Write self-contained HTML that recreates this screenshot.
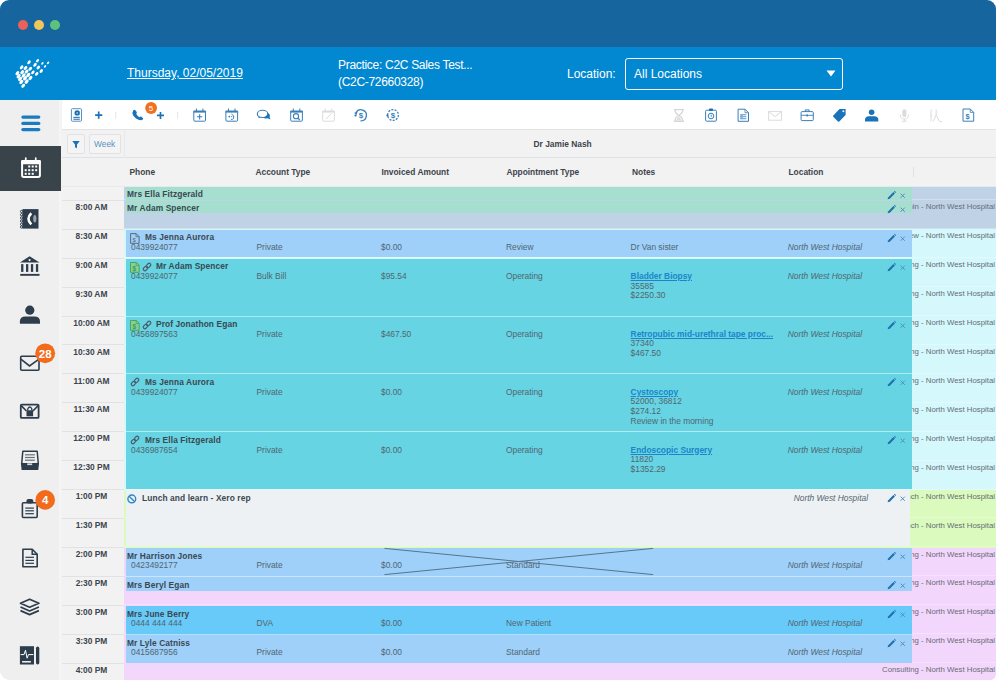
<!DOCTYPE html><html><head><meta charset="utf-8"><style>
*{box-sizing:border-box;margin:0;padding:0}
html,body{width:996px;height:680px;overflow:hidden;background:#fff}
body{position:relative;font-family:'Liberation Sans',sans-serif;}
.a{position:absolute}
.t{position:absolute;white-space:nowrap;line-height:1}
#win{position:absolute;left:0;top:0;width:996px;height:680px;border-radius:9px 9px 6px 10px;overflow:hidden;background:#f2f2f2}
</style></head><body><div id="win">
<div class="a" style="left:0;top:0;width:996px;height:47px;background:#17659e"></div>
<div class="a" style="left:17.6px;top:19.8px;width:10.4px;height:10.4px;border-radius:50%;background:#e8625a"></div>
<div class="a" style="left:33.5px;top:19.8px;width:10.4px;height:10.4px;border-radius:50%;background:#f0c65a"></div>
<div class="a" style="left:49.699999999999996px;top:19.8px;width:10.4px;height:10.4px;border-radius:50%;background:#5fc27a"></div>
<div class="a" style="left:0;top:47px;width:996px;height:53px;background:#0288d1"></div>
<svg class="a" style="left:0;top:0" width="60" height="100" viewBox="0 0 60 100"><ellipse cx="37.5" cy="60.7" rx="1.91" ry="1.23" fill="#fff" transform="rotate(-48 37.5 60.7)"/><ellipse cx="42.4" cy="63.4" rx="1.46" ry="0.94" fill="#fff" transform="rotate(-48 42.4 63.4)"/><ellipse cx="48.1" cy="62.9" rx="1.46" ry="0.94" fill="#fff" transform="rotate(-48 48.1 62.9)"/><ellipse cx="45.1" cy="66.4" rx="1.46" ry="0.94" fill="#fff" transform="rotate(-48 45.1 66.4)"/><ellipse cx="29.0" cy="62.3" rx="2.14" ry="1.38" fill="#fff" transform="rotate(-48 29.0 62.3)"/><ellipse cx="35.0" cy="64.8" rx="2.14" ry="1.38" fill="#fff" transform="rotate(-48 35.0 64.8)"/><ellipse cx="38.3" cy="67.5" rx="2.14" ry="1.38" fill="#fff" transform="rotate(-48 38.3 67.5)"/><ellipse cx="41.3" cy="71" rx="2.14" ry="1.38" fill="#fff" transform="rotate(-48 41.3 71)"/><ellipse cx="32.9" cy="72.4" rx="2.14" ry="1.38" fill="#fff" transform="rotate(-48 32.9 72.4)"/><ellipse cx="36.7" cy="73.9" rx="2.14" ry="1.38" fill="#fff" transform="rotate(-48 36.7 73.9)"/><ellipse cx="21.6" cy="67.4" rx="2.25" ry="1.45" fill="#fff" transform="rotate(-48 21.6 67.4)"/><ellipse cx="25.5" cy="68" rx="2.25" ry="1.45" fill="#fff" transform="rotate(-48 25.5 68)"/><ellipse cx="30.3" cy="68.8" rx="2.25" ry="1.45" fill="#fff" transform="rotate(-48 30.3 68.8)"/><ellipse cx="17.4" cy="73.2" rx="2.36" ry="1.52" fill="#fff" transform="rotate(-48 17.4 73.2)"/><ellipse cx="22.2" cy="72.2" rx="2.36" ry="1.52" fill="#fff" transform="rotate(-48 22.2 72.2)"/><ellipse cx="26.6" cy="71.6" rx="2.36" ry="1.52" fill="#fff" transform="rotate(-48 26.6 71.6)"/><ellipse cx="18.6" cy="76.2" rx="2.48" ry="1.59" fill="#fff" transform="rotate(-48 18.6 76.2)"/><ellipse cx="23.6" cy="75.5" rx="2.48" ry="1.59" fill="#fff" transform="rotate(-48 23.6 75.5)"/><ellipse cx="28.3" cy="74.9" rx="2.48" ry="1.59" fill="#fff" transform="rotate(-48 28.3 74.9)"/><ellipse cx="20.1" cy="78.9" rx="2.48" ry="1.59" fill="#fff" transform="rotate(-48 20.1 78.9)"/><ellipse cx="25.1" cy="78.3" rx="2.48" ry="1.59" fill="#fff" transform="rotate(-48 25.1 78.3)"/><ellipse cx="30.4" cy="78.0" rx="2.48" ry="1.59" fill="#fff" transform="rotate(-48 30.4 78.0)"/><ellipse cx="21.3" cy="82.0" rx="2.48" ry="1.59" fill="#fff" transform="rotate(-48 21.3 82.0)"/><ellipse cx="26.6" cy="81.6" rx="2.48" ry="1.59" fill="#fff" transform="rotate(-48 26.6 81.6)"/><ellipse cx="23.2" cy="85.8" rx="2.36" ry="1.52" fill="#fff" transform="rotate(-48 23.2 85.8)"/></svg>
<div class="t" style="left:127px;top:67px;font-size:12px;color:#fff;text-decoration:underline">Thursday, 02/05/2019</div>
<div class="t" style="left:338px;top:58.8px;font-size:12px;color:#fff;letter-spacing:-0.3px">Practice: C2C Sales Test...</div>
<div class="t" style="left:338px;top:75.7px;font-size:12px;color:#fff;letter-spacing:-0.3px">(C2C-72660328)</div>
<div class="t" style="left:567px;top:67.8px;font-size:12px;color:#fff">Location:</div>
<div class="a" style="left:625px;top:58px;width:218px;height:31.8px;border:1.4px solid #fff;border-radius:3px"></div>
<div class="t" style="left:634px;top:67.8px;font-size:12px;color:#fff">All Locations</div>
<svg class="a" style="left:826px;top:70px" width="10" height="7"><path d="M0.5 0.5H9.5L5 6.5Z" fill="#fff"/></svg>
<div class="a" style="left:0;top:100px;width:61px;height:580px;background:#efefef;border-right:2px solid #f5f5f5"></div>
<div class="a" style="left:0;top:146px;width:61px;height:45px;background:#38434a"></div>
<div class="a" style="left:62px;top:100px;width:934px;height:30px;background:#fff;border-bottom:1px solid #e3e3e3"></div>
<div class="a" style="left:62px;top:130px;width:934px;height:28px;background:#f2f2f2;border-bottom:1px solid #dde2e8"></div>
<div class="a" style="left:67px;top:134px;width:18px;height:20px;border:1px solid #e2e2e2;border-radius:2px;background:#f4f4f4"></div>
<div class="a" style="left:89px;top:134px;width:32px;height:20px;border:1px solid #e2e2e2;border-radius:2px;background:#f4f4f4"></div>
<div class="t" style="left:94px;top:139.5px;font-size:8.4px;color:#5b92c2">Week</div>
<div class="a" style="left:124px;top:130px;width:1px;height:557px;background:#e6e9ee"></div>
<div class="t" style="left:533.5px;top:139.5px;font-size:8.4px;font-weight:bold;color:#3c444c">Dr Jamie Nash</div>
<div class="a" style="left:62px;top:158px;width:934px;height:29px;background:#f2f2f2;border-bottom:1px solid #e6e9ee"></div>
<div class="t" style="left:129.5px;top:168.4px;font-size:8.4px;font-weight:bold;color:#3c444c">Phone</div>
<div class="t" style="left:255.5px;top:168.4px;font-size:8.4px;font-weight:bold;color:#3c444c">Account Type</div>
<div class="t" style="left:381.4px;top:168.4px;font-size:8.4px;font-weight:bold;color:#3c444c">Invoiced Amount</div>
<div class="t" style="left:506.4px;top:168.4px;font-size:8.4px;font-weight:bold;color:#3c444c">Appointment Type</div>
<div class="t" style="left:632px;top:168.4px;font-size:8.4px;font-weight:bold;color:#3c444c">Notes</div>
<div class="t" style="left:788.5px;top:168.4px;font-size:8.4px;font-weight:bold;color:#3c444c">Location</div>
<div class="a" style="left:913px;top:167px;width:1px;height:10px;background:#e2e2e2"></div>
<div class="a" style="left:62px;top:187px;width:62px;height:493px;background:#f2f2f2"></div>
<div class="a" style="left:62px;top:200px;width:62px;height:1px;background:#e2e2e2"></div>
<div class="t" style="left:60.5px;width:62px;text-align:center;top:202.8px;font-size:8.4px;font-weight:bold;color:#3c444c;padding-left:0px">8:00 AM</div>
<div class="a" style="left:62px;top:229px;width:62px;height:1px;background:#e2e2e2"></div>
<div class="t" style="left:60.5px;width:62px;text-align:center;top:231.8px;font-size:8.4px;font-weight:bold;color:#3c444c;padding-left:0px">8:30 AM</div>
<div class="a" style="left:62px;top:258px;width:62px;height:1px;background:#e2e2e2"></div>
<div class="t" style="left:60.5px;width:62px;text-align:center;top:260.7px;font-size:8.4px;font-weight:bold;color:#3c444c;padding-left:0px">9:00 AM</div>
<div class="a" style="left:62px;top:287px;width:62px;height:1px;background:#e2e2e2"></div>
<div class="t" style="left:60.5px;width:62px;text-align:center;top:289.7px;font-size:8.4px;font-weight:bold;color:#3c444c;padding-left:0px">9:30 AM</div>
<div class="a" style="left:62px;top:316px;width:62px;height:1px;background:#e2e2e2"></div>
<div class="t" style="left:60.5px;width:62px;text-align:center;top:318.6px;font-size:8.4px;font-weight:bold;color:#3c444c;padding-left:0px">10:00 AM</div>
<div class="a" style="left:62px;top:344px;width:62px;height:1px;background:#e2e2e2"></div>
<div class="t" style="left:60.5px;width:62px;text-align:center;top:347.6px;font-size:8.4px;font-weight:bold;color:#3c444c;padding-left:0px">10:30 AM</div>
<div class="a" style="left:62px;top:373px;width:62px;height:1px;background:#e2e2e2"></div>
<div class="t" style="left:60.5px;width:62px;text-align:center;top:376.5px;font-size:8.4px;font-weight:bold;color:#3c444c;padding-left:0px">11:00 AM</div>
<div class="a" style="left:62px;top:402px;width:62px;height:1px;background:#e2e2e2"></div>
<div class="t" style="left:60.5px;width:62px;text-align:center;top:405.4px;font-size:8.4px;font-weight:bold;color:#3c444c;padding-left:0px">11:30 AM</div>
<div class="a" style="left:62px;top:431px;width:62px;height:1px;background:#e2e2e2"></div>
<div class="t" style="left:60.5px;width:62px;text-align:center;top:434.4px;font-size:8.4px;font-weight:bold;color:#3c444c;padding-left:0px">12:00 PM</div>
<div class="a" style="left:62px;top:460px;width:62px;height:1px;background:#e2e2e2"></div>
<div class="t" style="left:60.5px;width:62px;text-align:center;top:463.4px;font-size:8.4px;font-weight:bold;color:#3c444c;padding-left:0px">12:30 PM</div>
<div class="a" style="left:62px;top:489px;width:62px;height:1px;background:#e2e2e2"></div>
<div class="t" style="left:60.5px;width:62px;text-align:center;top:492.3px;font-size:8.4px;font-weight:bold;color:#3c444c;padding-left:0px">1:00 PM</div>
<div class="a" style="left:62px;top:518px;width:62px;height:1px;background:#e2e2e2"></div>
<div class="t" style="left:60.5px;width:62px;text-align:center;top:521.2px;font-size:8.4px;font-weight:bold;color:#3c444c;padding-left:0px">1:30 PM</div>
<div class="a" style="left:62px;top:547px;width:62px;height:1px;background:#e2e2e2"></div>
<div class="t" style="left:60.5px;width:62px;text-align:center;top:550.2px;font-size:8.4px;font-weight:bold;color:#3c444c;padding-left:0px">2:00 PM</div>
<div class="a" style="left:62px;top:576px;width:62px;height:1px;background:#e2e2e2"></div>
<div class="t" style="left:60.5px;width:62px;text-align:center;top:579.1px;font-size:8.4px;font-weight:bold;color:#3c444c;padding-left:0px">2:30 PM</div>
<div class="a" style="left:62px;top:605px;width:62px;height:1px;background:#e2e2e2"></div>
<div class="t" style="left:60.5px;width:62px;text-align:center;top:608.1px;font-size:8.4px;font-weight:bold;color:#3c444c;padding-left:0px">3:00 PM</div>
<div class="a" style="left:62px;top:634px;width:62px;height:1px;background:#e2e2e2"></div>
<div class="t" style="left:60.5px;width:62px;text-align:center;top:637.0px;font-size:8.4px;font-weight:bold;color:#3c444c;padding-left:0px">3:30 PM</div>
<div class="a" style="left:62px;top:663px;width:62px;height:1px;background:#e2e2e2"></div>
<div class="t" style="left:60.5px;width:62px;text-align:center;top:666.0px;font-size:8.4px;font-weight:bold;color:#3c444c;padding-left:0px">4:00 PM</div>
<div class="a" style="left:124px;top:187px;width:872px;height:42px;background:#bfd2e6"></div>
<div class="a" style="left:124px;top:229px;width:872px;height:261px;background:#d4f8fb"></div>
<div class="a" style="left:124px;top:490px;width:872px;height:58px;background:#dbfabe"></div>
<div class="a" style="left:124px;top:548px;width:872px;height:132px;background:#f3d6fb"></div>
<div class="a" style="left:124px;top:199px;width:872px;height:1px;background:rgba(255,255,255,.3)"></div>
<div class="a" style="left:124px;top:228px;width:872px;height:1px;background:rgba(255,255,255,.3)"></div>
<div class="a" style="left:124px;top:257px;width:872px;height:1px;background:rgba(255,255,255,.3)"></div>
<div class="a" style="left:124px;top:286px;width:872px;height:1px;background:rgba(255,255,255,.3)"></div>
<div class="a" style="left:124px;top:315px;width:872px;height:1px;background:rgba(255,255,255,.3)"></div>
<div class="a" style="left:124px;top:344px;width:872px;height:1px;background:rgba(255,255,255,.3)"></div>
<div class="a" style="left:124px;top:373px;width:872px;height:1px;background:rgba(255,255,255,.3)"></div>
<div class="a" style="left:124px;top:402px;width:872px;height:1px;background:rgba(255,255,255,.3)"></div>
<div class="a" style="left:124px;top:431px;width:872px;height:1px;background:rgba(255,255,255,.3)"></div>
<div class="a" style="left:124px;top:460px;width:872px;height:1px;background:rgba(255,255,255,.3)"></div>
<div class="a" style="left:124px;top:489px;width:872px;height:1px;background:rgba(255,255,255,.3)"></div>
<div class="a" style="left:124px;top:517px;width:872px;height:1px;background:rgba(255,255,255,.3)"></div>
<div class="a" style="left:124px;top:546px;width:872px;height:1px;background:rgba(255,255,255,.3)"></div>
<div class="a" style="left:124px;top:575px;width:872px;height:1px;background:rgba(255,255,255,.3)"></div>
<div class="a" style="left:124px;top:604px;width:872px;height:1px;background:rgba(255,255,255,.3)"></div>
<div class="a" style="left:124px;top:633px;width:872px;height:1px;background:rgba(255,255,255,.3)"></div>
<div class="a" style="left:124px;top:662px;width:872px;height:1px;background:rgba(255,255,255,.3)"></div>
<div class="t" style="right:1px;top:203.1px;font-size:7.8px;color:#666d76">Admin - North West Hospital</div>
<div class="t" style="right:1px;top:232.0px;font-size:7.8px;color:#666d76">Review - North West Hospital</div>
<div class="t" style="right:1px;top:261.0px;font-size:7.8px;color:#666d76">Operating - North West Hospital</div>
<div class="t" style="right:1px;top:290.0px;font-size:7.8px;color:#666d76">Operating - North West Hospital</div>
<div class="t" style="right:1px;top:318.9px;font-size:7.8px;color:#666d76">Operating - North West Hospital</div>
<div class="t" style="right:1px;top:347.9px;font-size:7.8px;color:#666d76">Operating - North West Hospital</div>
<div class="t" style="right:1px;top:376.8px;font-size:7.8px;color:#666d76">Operating - North West Hospital</div>
<div class="t" style="right:1px;top:405.8px;font-size:7.8px;color:#666d76">Operating - North West Hospital</div>
<div class="t" style="right:1px;top:434.7px;font-size:7.8px;color:#666d76">Operating - North West Hospital</div>
<div class="t" style="right:1px;top:463.7px;font-size:7.8px;color:#666d76">Operating - North West Hospital</div>
<div class="t" style="right:1px;top:492.6px;font-size:7.8px;color:#666d76">Lunch - North West Hospital</div>
<div class="t" style="right:1px;top:521.6px;font-size:7.8px;color:#666d76">Lunch - North West Hospital</div>
<div class="t" style="right:1px;top:550.5px;font-size:7.8px;color:#666d76">Consulting - North West Hospital</div>
<div class="t" style="right:1px;top:579.4px;font-size:7.8px;color:#666d76">Consulting - North West Hospital</div>
<div class="t" style="right:1px;top:608.4px;font-size:7.8px;color:#666d76">Consulting - North West Hospital</div>
<div class="t" style="right:1px;top:637.4px;font-size:7.8px;color:#666d76">Consulting - North West Hospital</div>
<div class="t" style="right:1px;top:666.3px;font-size:7.8px;color:#666d76">Consulting - North West Hospital</div>
<div class="a" style="left:126px;top:187px;width:786px;height:13px;background:#a6dfd0"></div>
<svg class="a" style="left:885px;top:188px;width:24px;height:14px" viewBox="0 0 24 14"><path d="M2.6 11.3 L3.3 9.2 L8.4 4.1 L9.9 5.6 L4.8 10.7 Z" fill="#1f6fae"/><path d="M8.9 3.6 L9.7 2.8 L11.2 4.3 L10.4 5.1 Z" fill="#2a7fc0"/><path d="M15.6 5.6 L19.8 9.8 M19.8 5.6 L15.6 9.8" stroke="#4b90c6" stroke-width="1"/></svg>
<div class="t" style="left:127px;top:190.10px;font-size:8.4px;font-weight:bold;color:#3a4850;letter-spacing:0.1px;">Mrs Ella Fitzgerald</div>
<div class="a" style="left:126px;top:201px;width:786px;height:12px;background:#a6dfd0"></div>
<svg class="a" style="left:885px;top:202px;width:24px;height:14px" viewBox="0 0 24 14"><path d="M2.6 11.3 L3.3 9.2 L8.4 4.1 L9.9 5.6 L4.8 10.7 Z" fill="#1f6fae"/><path d="M8.9 3.6 L9.7 2.8 L11.2 4.3 L10.4 5.1 Z" fill="#2a7fc0"/><path d="M15.6 5.6 L19.8 9.8 M19.8 5.6 L15.6 9.8" stroke="#4b90c6" stroke-width="1"/></svg>
<div class="t" style="left:127px;top:203.90px;font-size:8.4px;font-weight:bold;color:#3a4850;letter-spacing:0.1px;">Mr Adam Spencer</div>
<div class="a" style="left:126px;top:230px;width:786px;height:27px;background:#9ed0fa"></div>
<svg class="a" style="left:885px;top:231px;width:24px;height:14px" viewBox="0 0 24 14"><path d="M2.6 11.3 L3.3 9.2 L8.4 4.1 L9.9 5.6 L4.8 10.7 Z" fill="#1f6fae"/><path d="M8.9 3.6 L9.7 2.8 L11.2 4.3 L10.4 5.1 Z" fill="#2a7fc0"/><path d="M15.6 5.6 L19.8 9.8 M19.8 5.6 L15.6 9.8" stroke="#4b90c6" stroke-width="1"/></svg>
<svg class="a" style="left:130px;top:233px" width="10" height="11" viewBox="0 0 10 11"><path d="M0.6 0.6 H6.2 L9.1 3.5 V10.3 H0.6 Z" fill="none" stroke="#5a6a78" stroke-width="1"/><path d="M6 0.6 V3.7 H9.1" fill="none" stroke="#5a6a78" stroke-width="0.8"/><text x="2.4" y="8.9" font-size="6" font-family="Liberation Sans" fill="#5a6a78">$</text></svg>
<div class="t" style="left:145px;top:233.35px;font-size:8.4px;font-weight:bold;color:#3a4850;letter-spacing:0.1px;">Ms Jenna Aurora</div>
<div class="t" style="left:131px;top:242.85px;font-size:8.4px;color:#52656f;">0439924077</div>
<div class="t" style="left:256.5px;top:242.85px;font-size:8.4px;color:#52656f;">Private</div>
<div class="t" style="left:381px;top:242.85px;font-size:8.4px;color:#52656f;">$0.00</div>
<div class="t" style="left:506px;top:242.85px;font-size:8.4px;color:#52656f;">Review</div>
<div class="t" style="left:630.6px;top:242.85px;font-size:8.4px;color:#52656f;">Dr Van sister</div>
<div class="t" style="left:762px;width:100px;text-align:right;top:242.85px;font-size:8.4px;font-style:italic;color:#52656f;">North West Hospital</div>
<div class="a" style="left:126px;top:259px;width:786px;height:57px;background:#66d4e3"></div>
<svg class="a" style="left:885px;top:260px;width:24px;height:14px" viewBox="0 0 24 14"><path d="M2.6 11.3 L3.3 9.2 L8.4 4.1 L9.9 5.6 L4.8 10.7 Z" fill="#1f6fae"/><path d="M8.9 3.6 L9.7 2.8 L11.2 4.3 L10.4 5.1 Z" fill="#2a7fc0"/><path d="M15.6 5.6 L19.8 9.8 M19.8 5.6 L15.6 9.8" stroke="#4b90c6" stroke-width="1"/></svg>
<svg class="a" style="left:130px;top:262px" width="10" height="11" viewBox="0 0 10 11"><path d="M0.5 0.5 H6.4 L9.2 3.3 V10.3 H0.5 Z" fill="#86cf95" stroke="#45a85c" stroke-width="1"/><path d="M6.2 0.6 V3.5 H9.1" fill="none" stroke="#45a85c" stroke-width="0.8"/><text x="2.5" y="8.8" font-size="6.5" font-weight="bold" font-family="Liberation Sans" fill="#3f9a55">$</text></svg><svg class="a" style="left:141.5px;top:262px" width="10" height="10" viewBox="0 0 10 10"><g transform="rotate(-45 5 5)" fill="none" stroke="#4b5c68" stroke-width="1.1"><rect x="0.4" y="3.4" width="5" height="3.2" rx="1.6"/><rect x="4.6" y="3.4" width="5" height="3.2" rx="1.6"/></g></svg>
<div class="t" style="left:156px;top:262.30px;font-size:8.4px;font-weight:bold;color:#3a4850;letter-spacing:0.1px;">Mr Adam Spencer</div>
<div class="t" style="left:131px;top:271.80px;font-size:8.4px;color:#52656f;">0439924077</div>
<div class="t" style="left:256.5px;top:271.80px;font-size:8.4px;color:#52656f;">Bulk Bill</div>
<div class="t" style="left:381px;top:271.80px;font-size:8.4px;color:#52656f;">$95.54</div>
<div class="t" style="left:506px;top:271.80px;font-size:8.4px;color:#52656f;">Operating</div>
<div class="t" style="left:630.6px;top:271.80px;font-size:8.4px;font-weight:bold;color:#1c84ca;text-decoration:underline;">Bladder Biopsy</div>
<div class="t" style="left:630.6px;top:281.55px;font-size:8.4px;color:#52656f;">35585</div>
<div class="t" style="left:630.6px;top:291.30px;font-size:8.4px;color:#52656f;">$2250.30</div>
<div class="t" style="left:762px;width:100px;text-align:right;top:271.80px;font-size:8.4px;font-style:italic;color:#52656f;">North West Hospital</div>
<div class="a" style="left:126px;top:317px;width:786px;height:56px;background:#66d4e3"></div>
<svg class="a" style="left:885px;top:318px;width:24px;height:14px" viewBox="0 0 24 14"><path d="M2.6 11.3 L3.3 9.2 L8.4 4.1 L9.9 5.6 L4.8 10.7 Z" fill="#1f6fae"/><path d="M8.9 3.6 L9.7 2.8 L11.2 4.3 L10.4 5.1 Z" fill="#2a7fc0"/><path d="M15.6 5.6 L19.8 9.8 M19.8 5.6 L15.6 9.8" stroke="#4b90c6" stroke-width="1"/></svg>
<svg class="a" style="left:130px;top:320px" width="10" height="11" viewBox="0 0 10 11"><path d="M0.5 0.5 H6.4 L9.2 3.3 V10.3 H0.5 Z" fill="#86cf95" stroke="#45a85c" stroke-width="1"/><path d="M6.2 0.6 V3.5 H9.1" fill="none" stroke="#45a85c" stroke-width="0.8"/><text x="2.5" y="8.8" font-size="6.5" font-weight="bold" font-family="Liberation Sans" fill="#3f9a55">$</text></svg><svg class="a" style="left:141.5px;top:320px" width="10" height="10" viewBox="0 0 10 10"><g transform="rotate(-45 5 5)" fill="none" stroke="#4b5c68" stroke-width="1.1"><rect x="0.4" y="3.4" width="5" height="3.2" rx="1.6"/><rect x="4.6" y="3.4" width="5" height="3.2" rx="1.6"/></g></svg>
<div class="t" style="left:156px;top:320.20px;font-size:8.4px;font-weight:bold;color:#3a4850;letter-spacing:0.1px;">Prof Jonathon Egan</div>
<div class="t" style="left:131px;top:329.70px;font-size:8.4px;color:#52656f;">0456897563</div>
<div class="t" style="left:256.5px;top:329.70px;font-size:8.4px;color:#52656f;">Private</div>
<div class="t" style="left:381px;top:329.70px;font-size:8.4px;color:#52656f;">$467.50</div>
<div class="t" style="left:506px;top:329.70px;font-size:8.4px;color:#52656f;">Operating</div>
<div class="t" style="left:630.6px;top:329.70px;font-size:8.4px;font-weight:bold;color:#1c84ca;text-decoration:underline;">Retropubic mid-urethral tape proc...</div>
<div class="t" style="left:630.6px;top:339.45px;font-size:8.4px;color:#52656f;">37340</div>
<div class="t" style="left:630.6px;top:349.20px;font-size:8.4px;color:#52656f;">$467.50</div>
<div class="t" style="left:762px;width:100px;text-align:right;top:329.70px;font-size:8.4px;font-style:italic;color:#52656f;">North West Hospital</div>
<div class="a" style="left:126px;top:374px;width:786px;height:57px;background:#66d4e3"></div>
<svg class="a" style="left:885px;top:375px;width:24px;height:14px" viewBox="0 0 24 14"><path d="M2.6 11.3 L3.3 9.2 L8.4 4.1 L9.9 5.6 L4.8 10.7 Z" fill="#1f6fae"/><path d="M8.9 3.6 L9.7 2.8 L11.2 4.3 L10.4 5.1 Z" fill="#2a7fc0"/><path d="M15.6 5.6 L19.8 9.8 M19.8 5.6 L15.6 9.8" stroke="#4b90c6" stroke-width="1"/></svg>
<svg class="a" style="left:130px;top:377px" width="10" height="10" viewBox="0 0 10 10"><g transform="rotate(-45 5 5)" fill="none" stroke="#4b5c68" stroke-width="1.1"><rect x="0.4" y="3.4" width="5" height="3.2" rx="1.6"/><rect x="4.6" y="3.4" width="5" height="3.2" rx="1.6"/></g></svg>
<div class="t" style="left:145px;top:378.10px;font-size:8.4px;font-weight:bold;color:#3a4850;letter-spacing:0.1px;">Ms Jenna Aurora</div>
<div class="t" style="left:131px;top:387.60px;font-size:8.4px;color:#52656f;">0439924077</div>
<div class="t" style="left:256.5px;top:387.60px;font-size:8.4px;color:#52656f;">Private</div>
<div class="t" style="left:381px;top:387.60px;font-size:8.4px;color:#52656f;">$0.00</div>
<div class="t" style="left:506px;top:387.60px;font-size:8.4px;color:#52656f;">Operating</div>
<div class="t" style="left:630.6px;top:387.60px;font-size:8.4px;font-weight:bold;color:#1c84ca;text-decoration:underline;">Cystoscopy</div>
<div class="t" style="left:630.6px;top:397.35px;font-size:8.4px;color:#52656f;">52000, 36812</div>
<div class="t" style="left:630.6px;top:407.10px;font-size:8.4px;color:#52656f;">$274.12</div>
<div class="t" style="left:630.6px;top:416.85px;font-size:8.4px;color:#52656f;">Review in the morning</div>
<div class="t" style="left:762px;width:100px;text-align:right;top:387.60px;font-size:8.4px;font-style:italic;color:#52656f;">North West Hospital</div>
<div class="a" style="left:126px;top:432px;width:786px;height:57px;background:#66d4e3"></div>
<svg class="a" style="left:885px;top:433px;width:24px;height:14px" viewBox="0 0 24 14"><path d="M2.6 11.3 L3.3 9.2 L8.4 4.1 L9.9 5.6 L4.8 10.7 Z" fill="#1f6fae"/><path d="M8.9 3.6 L9.7 2.8 L11.2 4.3 L10.4 5.1 Z" fill="#2a7fc0"/><path d="M15.6 5.6 L19.8 9.8 M19.8 5.6 L15.6 9.8" stroke="#4b90c6" stroke-width="1"/></svg>
<svg class="a" style="left:130px;top:435px" width="10" height="10" viewBox="0 0 10 10"><g transform="rotate(-45 5 5)" fill="none" stroke="#4b5c68" stroke-width="1.1"><rect x="0.4" y="3.4" width="5" height="3.2" rx="1.6"/><rect x="4.6" y="3.4" width="5" height="3.2" rx="1.6"/></g></svg>
<div class="t" style="left:145px;top:436.00px;font-size:8.4px;font-weight:bold;color:#3a4850;letter-spacing:0.1px;">Mrs Ella Fitzgerald</div>
<div class="t" style="left:131px;top:445.50px;font-size:8.4px;color:#52656f;">0436987654</div>
<div class="t" style="left:256.5px;top:445.50px;font-size:8.4px;color:#52656f;">Private</div>
<div class="t" style="left:381px;top:445.50px;font-size:8.4px;color:#52656f;">$0.00</div>
<div class="t" style="left:506px;top:445.50px;font-size:8.4px;color:#52656f;">Operating</div>
<div class="t" style="left:630.6px;top:445.50px;font-size:8.4px;font-weight:bold;color:#1c84ca;text-decoration:underline;">Endoscopic Surgery</div>
<div class="t" style="left:630.6px;top:455.25px;font-size:8.4px;color:#52656f;">11820</div>
<div class="t" style="left:630.6px;top:465.00px;font-size:8.4px;color:#52656f;">$1352.29</div>
<div class="t" style="left:762px;width:100px;text-align:right;top:445.50px;font-size:8.4px;font-style:italic;color:#52656f;">North West Hospital</div>
<div class="a" style="left:126px;top:490px;width:784px;height:56px;background:#eef1f4"></div>
<svg class="a" style="left:885px;top:491px;width:24px;height:14px" viewBox="0 0 24 14"><path d="M2.6 11.3 L3.3 9.2 L8.4 4.1 L9.9 5.6 L4.8 10.7 Z" fill="#1f6fae"/><path d="M8.9 3.6 L9.7 2.8 L11.2 4.3 L10.4 5.1 Z" fill="#2a7fc0"/><path d="M15.6 5.6 L19.8 9.8 M19.8 5.6 L15.6 9.8" stroke="#4b90c6" stroke-width="1"/></svg>
<svg class="a" style="left:127px;top:493.5px" width="10" height="10" viewBox="0 0 10 10"><circle cx="4.8" cy="4.9" r="3.9" fill="none" stroke="#2e86c8" stroke-width="1.4"/><path d="M2.1 2.2 L7.5 7.6" stroke="#2e86c8" stroke-width="1.4"/></svg>
<div class="t" style="left:142px;top:493.60px;font-size:8.4px;font-weight:bold;color:#3a4850;letter-spacing:0.1px;">Lunch and learn - Xero rep</div>
<div class="t" style="left:768px;width:100px;text-align:right;top:493.90px;font-size:8.4px;font-style:italic;color:#52656f;">North West Hospital</div>
<div class="a" style="left:126px;top:548px;width:786px;height:29px;background:#9ed0fa"></div>
<svg class="a" style="left:885px;top:549px;width:24px;height:14px" viewBox="0 0 24 14"><path d="M2.6 11.3 L3.3 9.2 L8.4 4.1 L9.9 5.6 L4.8 10.7 Z" fill="#1f6fae"/><path d="M8.9 3.6 L9.7 2.8 L11.2 4.3 L10.4 5.1 Z" fill="#2a7fc0"/><path d="M15.6 5.6 L19.8 9.8 M19.8 5.6 L15.6 9.8" stroke="#4b90c6" stroke-width="1"/></svg>

<div class="t" style="left:127px;top:551.80px;font-size:8.4px;font-weight:bold;color:#3a4850;letter-spacing:0.1px;">Mr Harrison Jones</div>
<div class="t" style="left:131px;top:561.30px;font-size:8.4px;color:#52656f;">0423492177</div>
<div class="t" style="left:256.5px;top:561.30px;font-size:8.4px;color:#52656f;">Private</div>
<div class="t" style="left:381px;top:561.30px;font-size:8.4px;color:#52656f;">$0.00</div>
<div class="t" style="left:506px;top:561.30px;font-size:8.4px;color:#52656f;">Standard</div>
<div class="t" style="left:762px;width:100px;text-align:right;top:561.30px;font-size:8.4px;font-style:italic;color:#52656f;">North West Hospital</div>
<svg class="a" style="left:0;top:0" width="996" height="680"><path d="M384.5 548.4 L653.1 574.6 M384.5 574.6 L653.1 548.4" stroke="#56768c" stroke-width="1"/></svg>
<div class="a" style="left:126px;top:577px;width:786px;height:14px;background:#9ed0fa"></div>
<svg class="a" style="left:885px;top:578px;width:24px;height:14px" viewBox="0 0 24 14"><path d="M2.6 11.3 L3.3 9.2 L8.4 4.1 L9.9 5.6 L4.8 10.7 Z" fill="#1f6fae"/><path d="M8.9 3.6 L9.7 2.8 L11.2 4.3 L10.4 5.1 Z" fill="#2a7fc0"/><path d="M15.6 5.6 L19.8 9.8 M19.8 5.6 L15.6 9.8" stroke="#4b90c6" stroke-width="1"/></svg>
<div class="t" style="left:127px;top:580.90px;font-size:8.4px;font-weight:bold;color:#3a4850;letter-spacing:0.1px;">Mrs Beryl Egan</div>
<div class="a" style="left:126px;top:606px;width:786px;height:29px;background:#68caf8"></div>
<svg class="a" style="left:885px;top:607px;width:24px;height:14px" viewBox="0 0 24 14"><path d="M2.6 11.3 L3.3 9.2 L8.4 4.1 L9.9 5.6 L4.8 10.7 Z" fill="#1f6fae"/><path d="M8.9 3.6 L9.7 2.8 L11.2 4.3 L10.4 5.1 Z" fill="#2a7fc0"/><path d="M15.6 5.6 L19.8 9.8 M19.8 5.6 L15.6 9.8" stroke="#4b90c6" stroke-width="1"/></svg>

<div class="t" style="left:127px;top:609.70px;font-size:8.4px;font-weight:bold;color:#3a4850;letter-spacing:0.1px;">Mrs June Berry</div>
<div class="t" style="left:131px;top:619.20px;font-size:8.4px;color:#52656f;">0444 444 444</div>
<div class="t" style="left:256.5px;top:619.20px;font-size:8.4px;color:#52656f;">DVA</div>
<div class="t" style="left:381px;top:619.20px;font-size:8.4px;color:#52656f;">$0.00</div>
<div class="t" style="left:506px;top:619.20px;font-size:8.4px;color:#52656f;">New Patient</div>
<div class="t" style="left:762px;width:100px;text-align:right;top:619.20px;font-size:8.4px;font-style:italic;color:#52656f;">North West Hospital</div>
<div class="a" style="left:126px;top:635px;width:786px;height:28px;background:#9ed0fa"></div>
<svg class="a" style="left:885px;top:636px;width:24px;height:14px" viewBox="0 0 24 14"><path d="M2.6 11.3 L3.3 9.2 L8.4 4.1 L9.9 5.6 L4.8 10.7 Z" fill="#1f6fae"/><path d="M8.9 3.6 L9.7 2.8 L11.2 4.3 L10.4 5.1 Z" fill="#2a7fc0"/><path d="M15.6 5.6 L19.8 9.8 M19.8 5.6 L15.6 9.8" stroke="#4b90c6" stroke-width="1"/></svg>

<div class="t" style="left:127px;top:638.65px;font-size:8.4px;font-weight:bold;color:#3a4850;letter-spacing:0.1px;">Mr Lyle Catniss</div>
<div class="t" style="left:131px;top:648.15px;font-size:8.4px;color:#52656f;">0415687956</div>
<div class="t" style="left:256.5px;top:648.15px;font-size:8.4px;color:#52656f;">Private</div>
<div class="t" style="left:381px;top:648.15px;font-size:8.4px;color:#52656f;">$0.00</div>
<div class="t" style="left:506px;top:648.15px;font-size:8.4px;color:#52656f;">Standard</div>
<div class="t" style="left:762px;width:100px;text-align:right;top:648.15px;font-size:8.4px;font-style:italic;color:#52656f;">North West Hospital</div>
<div class="a" style="left:126px;top:315px;width:786px;height:2px;background:rgba(102,212,227,.4)"></div>
<div class="a" style="left:126px;top:373px;width:786px;height:1px;background:rgba(102,212,227,.4)"></div>
<div class="a" style="left:126px;top:431px;width:786px;height:1px;background:rgba(102,212,227,.4)"></div>
<div class="a" style="left:126px;top:576px;width:786px;height:1px;background:rgba(255,255,255,.45)"></div>
<div class="a" style="left:126px;top:634px;width:786px;height:1px;background:rgba(255,255,255,.45)"></div>
<svg class="a" style="left:0;top:0" width="996" height="680" viewBox="0 0 996 680"><rect x="21.3" y="115.4" width="19.1" height="3.3" rx="1.6" fill="#1b7bc0"/><rect x="21.3" y="121.8" width="19.1" height="3.3" rx="1.6" fill="#1b7bc0"/><rect x="21.3" y="127.9" width="19.1" height="3.3" rx="1.6" fill="#1b7bc0"/><rect x="22.1" y="161" width="17.8" height="15.9" rx="1.6" fill="none" stroke="#fff" stroke-width="2"/><rect x="21.1" y="159.9" width="19.8" height="4.4" rx="1" fill="#fff"/><rect x="24.9" y="157.2" width="1.7" height="3.6" rx=".8" fill="#fff"/><rect x="34.9" y="157.2" width="1.7" height="3.6" rx=".8" fill="#fff"/><rect x="28.2" y="165.5" width="2" height="2" fill="#fff"/><rect x="31.700000000000003" y="165.5" width="2" height="2" fill="#fff"/><rect x="35.2" y="165.5" width="2" height="2" fill="#fff"/><rect x="24.7" y="169.2" width="2" height="2" fill="#fff"/><rect x="28.2" y="169.2" width="2" height="2" fill="#fff"/><rect x="31.700000000000003" y="169.2" width="2" height="2" fill="#fff"/><rect x="35.2" y="169.2" width="2" height="2" fill="#fff"/><rect x="24.7" y="172.8" width="2" height="2" fill="#fff"/><rect x="28.2" y="172.8" width="2" height="2" fill="#fff"/><rect x="31.700000000000003" y="172.8" width="2" height="2" fill="#fff"/><rect x="22.5" y="209.1" width="16" height="19.5" fill="#2e3d4b"/><circle cx="21.6" cy="211.5" r="1.15" fill="none" stroke="#2e3d4b" stroke-width="1"/><circle cx="21.6" cy="214.7" r="1.15" fill="none" stroke="#2e3d4b" stroke-width="1"/><circle cx="21.6" cy="217.9" r="1.15" fill="none" stroke="#2e3d4b" stroke-width="1"/><circle cx="21.6" cy="221.1" r="1.15" fill="none" stroke="#2e3d4b" stroke-width="1"/><circle cx="21.6" cy="224.3" r="1.15" fill="none" stroke="#2e3d4b" stroke-width="1"/><circle cx="21.6" cy="227.0" r="1.15" fill="none" stroke="#2e3d4b" stroke-width="1"/><path d="M31.3 213.2 Q25.6 218.8 31.3 224.4" fill="none" stroke="#fff" stroke-width="2.6"/><ellipse cx="34.8" cy="218.8" rx="1.6" ry="3.8" fill="#9aa3aa"/><path d="M19.9 262.6 L29.6 256.3 L39.5 262.6 Z" fill="#2e3d4b"/><circle cx="29.6" cy="260.1" r="1.1" fill="#efefef"/><rect x="21.1" y="264.1" width="2.3" height="7.8" fill="#2e3d4b"/><rect x="26.0" y="264.1" width="2.3" height="7.8" fill="#2e3d4b"/><rect x="30.9" y="264.1" width="2.3" height="7.8" fill="#2e3d4b"/><rect x="35.9" y="264.1" width="2.3" height="7.8" fill="#2e3d4b"/><rect x="20.2" y="273.9" width="19.3" height="1.9" fill="#2e3d4b"/><circle cx="29.8" cy="310.2" r="4.6" fill="#2e3d4b"/><path d="M19.9 323.8 V321.3 Q19.9 316.4 25.5 316.4 H34.3 Q40 316.4 40 321.3 V323.8 Z" fill="#2e3d4b"/><rect x="20.7" y="356.2" width="18.3" height="14" rx="1" fill="none" stroke="#2e3d4b" stroke-width="1.6"/><path d="M20.9 359.2 L29.5 366 L38.3 359.6" fill="none" stroke="#2e3d4b" stroke-width="1.6"/><circle cx="45.2" cy="353.3" r="9.9" fill="#f26a1b"/><text x="45.2" y="357.5" text-anchor="middle" font-family="Liberation Sans" font-weight="bold" font-size="11.5" fill="#fff">28</text><rect x="20.8" y="404.6" width="17.8" height="13.3" rx="1" fill="none" stroke="#2e3d4b" stroke-width="1.8"/><path d="M21.2 405.6 L26.5 411 M38.2 405.6 L32.9 411" fill="none" stroke="#2e3d4b" stroke-width="1.6"/><rect x="26.5" y="410.3" width="6.6" height="6" fill="#2e3d4b"/><path d="M27.8 410.5 V408.8 Q29.8 405.2 31.8 408.8 V410.5" fill="none" stroke="#2e3d4b" stroke-width="1.3"/><path d="M22.8 451.2 H37.2 L38.3 463.8 H21.7 Z" fill="none" stroke="#2e3d4b" stroke-width="1.5" stroke-linejoin="round"/><rect x="25" y="454.2" width="9.8" height="1.2" fill="#66717a"/><rect x="25" y="456.9" width="9.8" height="1.2" fill="#66717a"/><rect x="25" y="459.6" width="9.8" height="1.2" fill="#66717a"/><path d="M20.9 463.4 H39 L38.3 470.1 H21.6 Z" fill="#2e3d4b"/><rect x="27.2" y="463.4" width="5" height="1.7" fill="#d5d9dc"/><rect x="22.4" y="502.8" width="14.8" height="14.7" rx="1" fill="none" stroke="#2e3d4b" stroke-width="1.6"/><rect x="26.4" y="498.9" width="6.9" height="4.6" rx="2" fill="#2e3d4b"/><rect x="25.3" y="507.5" width="8.6" height="1.2" fill="#2e3d4b"/><rect x="25.3" y="510.2" width="8.6" height="1.2" fill="#2e3d4b"/><rect x="25.3" y="513.1" width="8.6" height="1.2" fill="#2e3d4b"/><circle cx="45.2" cy="499.9" r="9.8" fill="#f26a1b"/><text x="45.2" y="504.1" text-anchor="middle" font-family="Liberation Sans" font-weight="bold" font-size="11.5" fill="#fff">4</text><path d="M22.9 549.3 H32.2 L37.2 554.3 V566.7 H22.9 Z" fill="none" stroke="#2e3d4b" stroke-width="1.6" stroke-linejoin="round"/><path d="M32.2 549.3 V554.3 H37.2" fill="none" stroke="#2e3d4b" stroke-width="1.5"/><rect x="25.4" y="556.7" width="8.6" height="1.2" fill="#2e3d4b"/><rect x="25.4" y="559.8" width="8.6" height="1.2" fill="#2e3d4b"/><rect x="25.4" y="562.7" width="8.6" height="1.2" fill="#2e3d4b"/><path d="M20.5 603.3 L29.6 599.2 L38.9 603.3 L29.6 607.2 Z" fill="none" stroke="#2e3d4b" stroke-width="1.7" stroke-linejoin="round"/><path d="M20.5 607 L29.6 611 L38.9 607 M20.5 610.6 L29.6 614.6 L38.9 610.6" fill="none" stroke="#2e3d4b" stroke-width="1.7" stroke-linejoin="round"/><rect x="19.9" y="646.2" width="14.1" height="18.3" fill="#2e3d4b"/><path d="M20.6 654.6 H24 L25.5 650.2 L27.1 658.2 L28.5 654.6 H33.4" fill="none" stroke="#fff" stroke-width="1"/><rect x="22.1" y="661.1" width="8.8" height="1.4" fill="#fff"/><rect x="36" y="646.6" width="3.3" height="17.8" rx="1.6" fill="#2e3d4b"/><rect x="71.4" y="108.7" width="10.1" height="12.5" rx="1" fill="none" stroke="#5b8fc0" stroke-width="1"/><circle cx="77.2" cy="112.9" r="2.7" fill="#1a6fb0"/><circle cx="77.2" cy="112.9" r="1" fill="#7cc0f0"/><rect x="73.4" y="116.8" width="6.4" height="1.3" fill="#3f7fb6"/><rect x="73.4" y="118.7" width="6.4" height="1.3" fill="#5a92c2"/><path d="M95.1 115.2 H102.3 M98.7 111.6 V118.8" stroke="#1a72b8" stroke-width="1.7"/><rect x="115.3" y="112" width="0.9" height="6.6" fill="#e3e3e3"/><path d="M133.2 110.4 Q131.6 112.6 133.2 115.6 Q136 119.6 140.8 120.3 Q142.9 120.4 143.3 118.6 L141.2 116.6 Q140.3 116.4 139.6 117.2 Q137.2 116.3 136.2 113.8 Q137 113.1 136.8 112.1 L135.1 110 Q134 109.6 133.2 110.4 Z" fill="#1a72b8"/><circle cx="151.1" cy="108" r="5.9" fill="#f0701f"/><text x="151.1" y="110.9" text-anchor="middle" font-family="Liberation Sans" font-size="8" fill="#fff">5</text><path d="M157 115.4 H164 M160.5 111.9 V118.9" stroke="#1a72b8" stroke-width="1.7"/><rect x="177.2" y="112" width="0.9" height="6.6" fill="#e3e3e3"/><rect x="193.8" y="111.2" width="11.7" height="10" rx="1" fill="none" stroke="#3a7fb8" stroke-width="1"/><rect x="193.3" y="110.7" width="12.7" height="1.9" fill="#3a7fb8"/><rect x="195.9" y="108.5" width="1" height="2.6" fill="#3a7fb8"/><rect x="202.4" y="108.5" width="1" height="2.6" fill="#3a7fb8"/><path d="M197 116.8 H202.3 M199.65 114.2 V119.4" stroke="#3a7fb8" stroke-width="1.1"/><rect x="225.9" y="111.2" width="11.7" height="10" rx="1" fill="none" stroke="#3a7fb8" stroke-width="1"/><rect x="225.4" y="110.7" width="12.7" height="1.9" fill="#3a7fb8"/><rect x="228.0" y="108.5" width="1" height="2.6" fill="#3a7fb8"/><rect x="234.5" y="108.5" width="1" height="2.6" fill="#3a7fb8"/><circle cx="229.3" cy="116.6" r=".9" fill="#3a7fb8"/><path d="M231.5 114 Q235 115.5 233.5 118.5 Q232.5 119.6 231 119.4" fill="none" stroke="#3a7fb8" stroke-width="1"/><circle cx="231.7" cy="116.6" r=".6" fill="#3a7fb8"/><ellipse cx="262.6" cy="113.9" rx="5.3" ry="3.6" fill="none" stroke="#3a7fb8" stroke-width="1.1"/><path d="M259 116.8 L258 118.2 L261 117.4" fill="#3a7fb8"/><path d="M267.6 112.8 Q270.8 114.5 269.6 117.2 L270.5 119.4 L267.5 118.3 Q264.5 118.8 263.2 117.6 Q267.5 116.6 267.6 112.8 Z" fill="#1a72b8"/><rect x="290.7" y="111.2" width="11.7" height="10" rx="1" fill="none" stroke="#3a7fb8" stroke-width="1"/><rect x="290.2" y="110.7" width="12.7" height="1.9" fill="#3a7fb8"/><rect x="292.8" y="108.5" width="1" height="2.6" fill="#3a7fb8"/><rect x="299.3" y="108.5" width="1" height="2.6" fill="#3a7fb8"/><circle cx="296" cy="116.2" r="2.6" fill="none" stroke="#3a7fb8" stroke-width="1.1"/><path d="M297.9 118.1 L299.8 120" stroke="#3a7fb8" stroke-width="1.2"/><rect x="322.7" y="111.2" width="11.7" height="10" rx="1" fill="none" stroke="#dcdcdc" stroke-width="1"/><rect x="322.2" y="110.7" width="12.7" height="1.9" fill="#dcdcdc"/><rect x="324.8" y="108.5" width="1" height="2.6" fill="#dcdcdc"/><rect x="331.3" y="108.5" width="1" height="2.6" fill="#dcdcdc"/><path d="M326 119 L331.5 113.5" stroke="#dcdcdc" stroke-width="1"/><path d="M356 112.8 A5.5 5.5 0 1 1 360.5 120.8" fill="none" stroke="#3a7fb8" stroke-width="1.3"/><circle cx="355.5" cy="115.5" r="1.1" fill="#1a72b8"/><path d="M354.3 112.8 L357.5 112 L356.3 115" fill="#1a72b8"/><text x="361" y="118.2" text-anchor="middle" font-family="Liberation Sans" font-size="8" font-weight="bold" fill="#3a7fb8">$</text><circle cx="393" cy="115" r="5.4" fill="none" stroke="#3a7fb8" stroke-width="1.3" stroke-dasharray="2 1.3"/><circle cx="387.4" cy="115.5" r="1.1" fill="#1a72b8"/><text x="393" y="118.2" text-anchor="middle" font-family="Liberation Sans" font-size="8" font-weight="bold" fill="#3a7fb8">$</text><path d="M673.8 109.6 H684 M673.8 121.4 H684 M675 109.6 Q675 113.5 678.9 115.5 Q682.8 117.5 682.8 121.4 M682.8 109.6 Q682.8 113.5 678.9 115.5 Q675 117.5 675 121.4" fill="none" stroke="#d6d6d6" stroke-width="1.3"/><path d="M676.2 120.8 Q677 117.6 678.9 116.8 Q680.8 117.6 681.6 120.8 Z" fill="#dedede"/><rect x="705.6" y="110.2" width="10.8" height="11" rx="1" fill="none" stroke="#3a7fb8" stroke-width="1"/><rect x="709" y="108.6" width="4" height="2.3" rx=".8" fill="#1a72b8"/><circle cx="711" cy="116" r="2.8" fill="none" stroke="#3a7fb8" stroke-width="1"/><path d="M711 114.5 V116 L712.2 116.8" fill="none" stroke="#3a7fb8" stroke-width=".8"/><path d="M738.1 109.2 H745 L748.5 112.7 V121.3 H738.1 Z" fill="none" stroke="#3a7fb8" stroke-width="1" stroke-linejoin="round"/><path d="M745 109.2 V112.7 H748.5" fill="none" stroke="#3a7fb8" stroke-width=".8"/><rect x="740.3" y="114.2" width="6" height="1" fill="#5e95c6"/><rect x="740.3" y="116.2" width="6" height="1" fill="#5e95c6"/><rect x="740.3" y="118.2" width="6" height="1" fill="#5e95c6"/><rect x="740.3" y="114.2" width="2.4" height="5" fill="#7fb0dc"/><rect x="768.6" y="111.4" width="13" height="8.8" fill="none" stroke="#dcdcdc" stroke-width="1"/><path d="M768.8 111.8 L775.1 116.6 L781.4 111.8" fill="none" stroke="#dcdcdc" stroke-width="1"/><rect x="801.1" y="111.6" width="12.2" height="9" rx="1" fill="none" stroke="#3a7fb8" stroke-width="1"/><path d="M805.3 111.6 V109.9 H809.1 V111.6" fill="none" stroke="#3a7fb8" stroke-width="1"/><path d="M801.3 115.3 H813.1" stroke="#3a7fb8" stroke-width=".9"/><rect x="806.4" y="114.4" width="1.6" height="2" fill="#3a7fb8"/><path d="M839.5 109 H845.6 V115 L839.3 121.4 Q838.6 122 837.9 121.4 L833.3 116.8 Q832.7 116.1 833.3 115.4 Z" fill="#1a72b8"/><circle cx="843.4" cy="111.2" r="1" fill="#fff"/><circle cx="871.6" cy="112.2" r="2.8" fill="#1a72b8"/><path d="M865 121.5 V119.8 Q865 116.3 869 116.3 H874.3 Q878.3 116.3 878.3 119.8 V121.5 Z" fill="#1a72b8"/><rect x="902.3" y="109.2" width="4.2" height="8" rx="2.1" fill="#dcdcdc"/><path d="M900.2 114.5 Q900.2 119 904.4 119 Q908.6 119 908.6 114.5 M904.4 119 V121 M902 121.2 H906.8" fill="none" stroke="#dcdcdc" stroke-width="1"/><path d="M931 109.5 V121.5 M936.2 109.3 V115 L933.2 121.5 M936.2 115 L939.5 121.5 M930.4 115.5 H932 M940 121.5 H942" fill="none" stroke="#dcdcdc" stroke-width="1"/><path d="M963 109 H970.3 L973.7 112.4 V121.2 H963 Z" fill="none" stroke="#3a7fb8" stroke-width="1" stroke-linejoin="round"/><path d="M970.3 109 V112.4 H973.7" fill="none" stroke="#3a7fb8" stroke-width=".8"/><text x="967.6" y="119.3" text-anchor="middle" font-family="Liberation Sans" font-size="7.5" font-weight="bold" fill="#3a7fb8">$</text><path d="M72.3 141 H79.7 L77 144.6 V148.2 L75 147.2 V144.6 Z" fill="#1a72b8"/></svg>
</div></body></html>
